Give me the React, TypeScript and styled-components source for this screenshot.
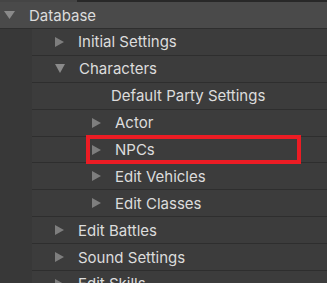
import styled, { createGlobalStyle, css } from "styled-components";

const GlobalStyle = createGlobalStyle`
  html, body {
    margin: 0;
    padding: 0;
    background: #3c3c3c;
    overflow: hidden;
  }
  body {
    font-family: Inter, "Noto Sans", sans-serif;
  }
`;

const Panel = styled.div`
  width: 327px;
  height: 283px;
  overflow: hidden;
  background: #3c3c3c;
  color: #dcdcdc;
  font-size: 15px;
`;

const TopStrip = styled.div`
  display: flex;
  height: 2px;
`;

const StripPart = styled.div<{ $dark?: boolean }>`
  width: ${({ $dark }) => ($dark ? "auto" : "77px")};
  flex: ${({ $dark }) => ($dark ? 1 : "none")};
  background: ${({ $dark }) => ($dark ? "#282828" : "#454545")};
`;

const Header = styled.div`
  display: flex;
  align-items: center;
  height: 27px;
  box-sizing: border-box;
  padding-left: 4px;
  column-gap: 14px;
  background: #4a4a4a;
  border-bottom: 1px solid #2e2e2e;
`;

const Body = styled.div`
  display: flex;
`;

const Gutter = styled.div`
  width: 32px;
  flex: none;
  background: #383838;
`;

const List = styled.div`
  flex: 1;
`;

const Row = styled.div<{ $depth: number; $highlight?: boolean }>`
  position: relative;
  display: flex;
  align-items: center;
  height: 26.9px;
  box-sizing: border-box;
  border-bottom: 1px solid #2e2e2e;
  padding-left: ${({ $depth }) => 23 + ($depth - 1) * 37}px;
  column-gap: 14px;

  ${({ $highlight }) =>
    $highlight &&
    css`
      &::after {
        content: "";
        position: absolute;
        left: 54px;
        top: -2px;
        width: 215px;
        height: 29px;
        box-sizing: border-box;
        border: 4px solid #ec1c24;
      }
    `}
`;

const Arrow = styled.svg`
  flex: none;
  display: block;
`;

// leaf rows sit a little left of where the caret would be
const Spacer = styled.span`
  width: 5px;
  flex: none;
`;

const Label = styled.span`
  white-space: nowrap;
  line-height: 1;
`;

function Caret({ open, big }: { open?: boolean; big?: boolean }) {
  if (open) {
    const w = big ? 11 : 10;
    const h = big ? 8 : 9;
    return (
      <Arrow width={w} height={h} viewBox={`0 0 ${w} ${h}`}>
        <polygon points={`0,0 ${w},0 ${w / 2},${h}`} fill="#8a8a8a" />
      </Arrow>
    );
  }
  return (
    <Arrow width={9} height={10} viewBox="0 0 9 10">
      <polygon points="0,0 9,5 0,10" fill="#7e7e7e" />
    </Arrow>
  );
}

type Item = {
  label: string;
  depth: number;
  kind: "closed" | "open" | "leaf";
  highlight?: boolean;
};

const items: Item[] = [
  { label: "Initial Settings", depth: 1, kind: "closed" },
  { label: "Characters", depth: 1, kind: "open" },
  { label: "Default Party Settings", depth: 2, kind: "leaf" },
  { label: "Actor", depth: 2, kind: "closed" },
  { label: "NPCs", depth: 2, kind: "closed", highlight: true },
  { label: "Edit Vehicles", depth: 2, kind: "closed" },
  { label: "Edit Classes", depth: 2, kind: "closed" },
  { label: "Edit Battles", depth: 1, kind: "closed" },
  { label: "Sound Settings", depth: 1, kind: "closed" },
  { label: "Edit Skills", depth: 1, kind: "closed" },
];

export default function App() {
  return (
    <>
      <GlobalStyle />
      <Panel>
        <TopStrip>
          <StripPart />
          <StripPart $dark />
        </TopStrip>
        <Header>
          <Caret open big />
          <Label>Database</Label>
        </Header>
        <Body>
          <Gutter />
          <List>
            {items.map((it) => (
              <Row key={it.label} $depth={it.depth} $highlight={it.highlight}>
                {it.kind === "leaf" ? <Spacer /> : <Caret open={it.kind === "open"} />}
                <Label>{it.label}</Label>
              </Row>
            ))}
          </List>
        </Body>
      </Panel>
    </>
  );
}
